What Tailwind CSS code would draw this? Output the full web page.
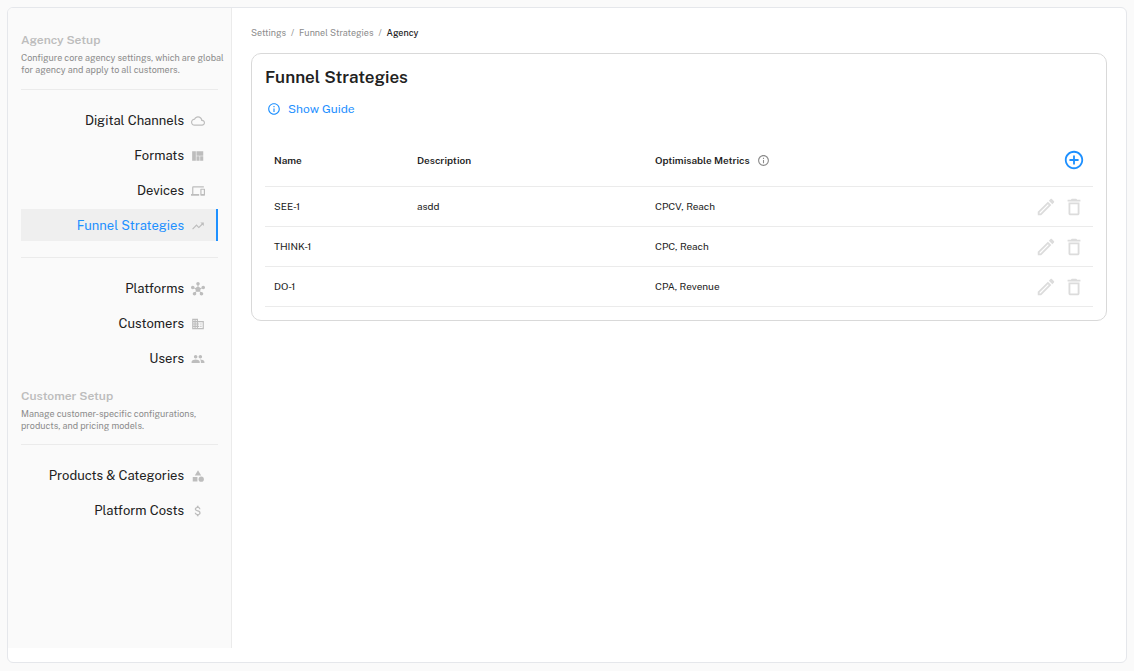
<!DOCTYPE html>
<html lang="en">
<head>
    <meta charset="UTF-8">
    <meta name="viewport" content="width=device-width, initial-scale=1.0">
    <title>Funnel Strategies</title>
    <script src="https://cdn.jsdelivr.net/npm/@tailwindcss/browser@4"></script>
</head>
<body class="bg-[#fafafa] font-['Public_Sans',Inter,sans-serif] text-[#212121] min-h-screen flex p-[7px] pb-2">

    <!-- Icons -->
    <svg class="hidden">
        <symbol id="edit" viewBox="0 0 24 24"><path d="M14.06 9.02l.92.92L5.92 19H5v-.92l9.06-9.06M17.66 3c-.25 0-.51.1-.7.29l-1.83 1.83 3.75 3.75 1.83-1.83c.39-.39.39-1.02 0-1.41l-2.34-2.34c-.2-.2-.45-.29-.71-.29zm-3.6 3.19L3 17.25V21h3.75L17.81 9.94l-3.75-3.75z"/></symbol>
        <symbol id="delete" viewBox="0 0 24 24"><path d="M16 9v10H8V9h8m-1.5-6h-5l-1 1H5v2h14V4h-3.5l-1-1zM18 7H6v12c0 1.1.9 2 2 2h8c1.1 0 2-.9 2-2V7z"/></symbol>
        <symbol id="info" viewBox="0 0 24 24"><path d="M11 7h2v2h-2zm0 4h2v6h-2zm1-9C6.48 2 2 6.48 2 12s4.48 10 10 10 10-4.48 10-10S17.52 2 12 2zm0 18c-4.41 0-8-3.59-8-8s3.59-8 8-8 8 3.59 8 8-3.59 8-8 8z"/></symbol>
    </svg>

    <div class="flex-1 flex items-stretch bg-white border border-[#e5e7eb] rounded-md overflow-hidden">

        <!-- Sidebar -->
        <aside class="w-56 shrink-0 mb-3.5 bg-[#fafafa] border-r border-[#ebebeb] px-[13px] pt-6">
            <h2 class="text-xs leading-4 font-semibold text-[#bdbdbd]">Agency Setup</h2>
            <p class="mt-1 -mr-3 text-[9px] leading-3 text-[#8c8c8c]">Configure core agency settings, which are global for agency and apply to all customers.</p>

            <nav class="mt-[13px] border-t border-[#ebebeb] pt-3.5 flex flex-col gap-[3px] text-[13px]">
                <a href="#" class="h-8 pt-0.5 flex items-center justify-end gap-[7px] pr-[13px]">
                    Digital Channels
                    <svg class="size-3.5 fill-[#bdbdbd]" viewBox="0 0 24 24"><path d="M19.35 10.04C18.67 6.59 15.64 4 12 4 9.11 4 6.6 5.64 5.35 8.04 2.34 8.36 0 10.91 0 14c0 3.31 2.69 6 6 6h13c2.76 0 5-2.24 5-5 0-2.64-2.05-4.78-4.65-4.96zM19 18H6c-2.21 0-4-1.79-4-4s1.79-4 4-4h.71C7.37 7.69 9.48 6 12 6c3.04 0 5.5 2.46 5.5 5.5v.5H19c1.66 0 3 1.34 3 3s-1.34 3-3 3z"/></svg>
                </a>
                <a href="#" class="h-8 pt-0.5 flex items-center justify-end gap-[7px] pr-[13px]">
                    Formats
                    <svg class="size-3.5 fill-[#bdbdbd]" viewBox="0 0 24 24"><path d="M21 4v7.5H9.33V4H21zm-6.33 16v-7.5H9.33V20h5.34zm1-7.5V20H21v-7.5h-5.33zM8.33 20V4H2v16h6.33z"/></svg>
                </a>
                <a href="#" class="h-8 pt-0.5 flex items-center justify-end gap-[7px] pr-[13px]">
                    Devices
                    <svg class="size-3.5 fill-[#bdbdbd]" viewBox="0 0 24 24"><path d="M4 6h18V4H4c-1.1 0-2 .9-2 2v11H0v3h14v-3H4V6zm19 2h-6c-.55 0-1 .45-1 1v10c0 .55.45 1 1 1h6c.55 0 1-.45 1-1V9c0-.55-.45-1-1-1zm-1 9h-4v-7h4v7z"/></svg>
                </a>
                <a href="#" class="h-8 pt-0.5 flex items-center justify-end gap-[7px] pr-[11px] bg-[#efefef] border-r-2 border-[#1e90ff] text-[#1e90ff]">
                    Funnel Strategies
                    <svg class="size-3.5 fill-[#bdbdbd]" viewBox="0 0 24 24"><path d="M16 6l2.29 2.29-4.88 4.88-4-4L2 16.59 3.41 18l6-6 4 4 6.3-6.29L22 12V6z"/></svg>
                </a>
            </nav>

            <nav class="mt-4 border-t border-[#ebebeb] pt-3.5 flex flex-col gap-[3px] text-[13px]">
                <a href="#" class="h-8 pt-0.5 flex items-center justify-end gap-[7px] pr-[13px]">
                    Platforms
                    <svg class="size-3.5 fill-[#bdbdbd]" viewBox="0 0 24 24"><path d="M8.4 18.2c.38.5.6 1.12.6 1.8 0 1.66-1.34 3-3 3s-3-1.34-3-3 1.34-3 3-3c.44 0 .85.09 1.23.26l1.41-1.77c-.92-1.03-1.29-2.39-1.09-3.69l-2.03-.68C4.98 11.95 4.06 12.5 3 12.5c-1.66 0-3-1.34-3-3s1.34-3 3-3 3 1.34 3 3c0 .07 0 .14-.01.21l2.03.68c.64-1.21 1.82-2.09 3.22-2.32V5.91C9.96 5.57 9 4.4 9 3c0-1.66 1.34-3 3-3s3 1.34 3 3c0 1.4-.96 2.57-2.25 2.91v2.16c1.4.23 2.58 1.11 3.22 2.32l2.03-.68C18 9.64 18 9.57 18 9.5c0-1.66 1.34-3 3-3s3 1.34 3 3-1.34 3-3 3c-1.06 0-1.98-.55-2.52-1.37l-2.03.68c.2 1.29-.16 2.65-1.09 3.69l1.41 1.77c.38-.17.79-.27 1.23-.27 1.66 0 3 1.34 3 3s-1.34 3-3 3-3-1.34-3-3c0-.68.22-1.3.6-1.8l-1.41-1.77c-1.35.75-3.01.76-4.37 0L8.4 18.2z"/></svg>
                </a>
                <a href="#" class="h-8 pt-0.5 flex items-center justify-end gap-[7px] pr-[13px]">
                    Customers
                    <svg class="size-3.5 fill-[#bdbdbd]" viewBox="0 0 24 24"><path d="M12 7V3H2v18h20V7H12zM6 19H4v-2h2v2zm0-4H4v-2h2v2zm0-4H4V9h2v2zm0-4H4V5h2v2zm4 12H8v-2h2v2zm0-4H8v-2h2v2zm0-4H8V9h2v2zm0-4H8V5h2v2zm10 12h-8v-2h2v-2h-2v-2h2v-2h-2V9h8v10zm-2-8h-2v2h2v-2zm0 4h-2v2h2v-2z"/></svg>
                </a>
                <a href="#" class="h-8 pt-0.5 flex items-center justify-end gap-[7px] pr-[13px]">
                    Users
                    <svg class="size-3.5 fill-[#bdbdbd]" viewBox="0 0 24 24"><path d="M16 11c1.66 0 2.99-1.34 2.99-3S17.66 5 16 5c-1.66 0-3 1.34-3 3s1.34 3 3 3zm-8 0c1.66 0 2.99-1.34 2.99-3S9.66 5 8 5C6.34 5 5 6.34 5 8s1.34 3 3 3zm0 2c-2.33 0-7 1.17-7 3.5V19h14v-2.5c0-2.33-4.67-3.5-7-3.5zm8 0c-.29 0-.62.02-.97.05 1.16.84 1.97 1.97 1.97 3.45V19h6v-2.5c0-2.33-4.67-3.5-7-3.5z"/></svg>
                </a>
            </nav>

            <h2 class="mt-3.5 text-xs leading-4 font-semibold text-[#bdbdbd]">Customer Setup</h2>
            <p class="mt-1 -mr-3 text-[9px] leading-3 text-[#8c8c8c]">Manage customer-specific configurations, products, and pricing models.</p>

            <nav class="mt-3 border-t border-[#ebebeb] pt-3.5 flex flex-col gap-[3px] text-[13px]">
                <a href="#" class="h-8 pt-0.5 flex items-center justify-end gap-[7px] pr-[13px]">
                    Products &amp; Categories
                    <svg class="size-3.5 fill-[#bdbdbd]" viewBox="0 0 24 24"><path d="M12 2l-5.5 9h11zM3 13.5h8v8H3z"/><circle cx="17.5" cy="17.5" r="4.5"/></svg>
                </a>
                <a href="#" class="h-8 pt-0.5 flex items-center justify-end gap-[7px] pr-[13px]">
                    Platform Costs
                    <svg class="size-3.5 fill-[#bdbdbd]" viewBox="0 0 24 24"><path d="M11.8 10.9c-2.27-.59-3-1.2-3-2.15 0-1.09 1.01-1.85 2.7-1.85 1.78 0 2.44.85 2.5 2.1h2.21c-.07-1.72-1.12-3.3-3.21-3.81V3h-3v2.16c-1.94.42-3.5 1.68-3.5 3.61 0 2.31 1.91 3.46 4.7 4.13 2.5.6 3 1.48 3 2.41 0 .69-.49 1.79-2.7 1.79-2.06 0-2.87-.92-2.98-2.1h-2.2c.12 2.19 1.76 3.42 3.68 3.83V21h3v-2.15c1.95-.37 3.5-1.5 3.5-3.55 0-2.84-2.43-3.81-4.7-4.4z"/></svg>
                </a>
            </nav>
        </aside>

        <!-- Content -->
        <main class="flex-1 px-[19px] pt-[19px]">
            <nav class="flex gap-[5px] text-[9px] leading-3 text-[#8c8c8c]">
                <a href="#">Settings</a>
                <span>/</span>
                <a href="#">Funnel Strategies</a>
                <span>/</span>
                <span class="font-medium text-[#212121]">Agency</span>
            </nav>

            <section class="mt-3.5 border border-[#d9d9d9] rounded-[10px] p-[13px]">
                <h1 class="text-[17px] leading-5 font-semibold">Funnel Strategies</h1>
                <button class="mt-3 ml-0.5 flex items-center gap-[7px] text-xs leading-5 text-[#1e90ff]">
                    <svg class="size-3.5 fill-current"><use href="#info"/></svg>
                    Show Guide
                </button>

                <table class="mt-4 w-full table-fixed text-[10px] text-left">
                    <thead>
                        <tr class="h-[51px] border-b border-[#ebebeb]">
                            <th class="w-[143px] px-[9px] font-semibold">Name</th>
                            <th class="w-[238px] px-[9px] font-semibold">Description</th>
                            <th class="px-[9px] font-semibold">
                                <div class="flex items-center gap-[7px]">
                                    Optimisable Metrics
                                    <svg class="size-[13px] fill-[#8c8c8c]"><use href="#info"/></svg>
                                </div>
                            </th>
                            <th class="w-20 px-2">
                                <button aria-label="Add strategy" class="block ml-auto">
                                    <svg class="size-[22px] fill-[#1e90ff]" viewBox="0 0 24 24"><path d="M13 7h-2v4H7v2h4v4h2v-4h4v-2h-4V7zm-1-5C6.48 2 2 6.48 2 12s4.48 10 10 10 10-4.48 10-10S17.52 2 12 2zm0 18c-4.41 0-8-3.59-8-8s3.59-8 8-8 8 3.59 8 8-3.59 8-8 8z"/></svg>
                                </button>
                            </th>
                        </tr>
                    </thead>
                    <tbody>
                        <tr class="h-10 border-b border-[#ebebeb]">
                            <td class="px-[9px]">SEE-1</td>
                            <td class="px-[9px]">asdd</td>
                            <td class="px-[9px]">CPCV, Reach</td>
                            <td class="px-2 pt-px">
                                <div class="flex justify-end gap-1.5">
                                    <button aria-label="Edit"><svg class="size-[22px] fill-[#dcdcdc]"><use href="#edit"/></svg></button>
                                    <button aria-label="Delete"><svg class="size-[22px] fill-[#dcdcdc]"><use href="#delete"/></svg></button>
                                </div>
                            </td>
                        </tr>
                        <tr class="h-10 border-b border-[#ebebeb]">
                            <td class="px-[9px]">THINK-1</td>
                            <td class="px-[9px]"></td>
                            <td class="px-[9px]">CPC, Reach</td>
                            <td class="px-2 pt-px">
                                <div class="flex justify-end gap-1.5">
                                    <button aria-label="Edit"><svg class="size-[22px] fill-[#dcdcdc]"><use href="#edit"/></svg></button>
                                    <button aria-label="Delete"><svg class="size-[22px] fill-[#dcdcdc]"><use href="#delete"/></svg></button>
                                </div>
                            </td>
                        </tr>
                        <tr class="h-10 border-b border-[#ebebeb]">
                            <td class="px-[9px]">DO-1</td>
                            <td class="px-[9px]"></td>
                            <td class="px-[9px]">CPA, Revenue</td>
                            <td class="px-2 pt-px">
                                <div class="flex justify-end gap-1.5">
                                    <button aria-label="Edit"><svg class="size-[22px] fill-[#dcdcdc]"><use href="#edit"/></svg></button>
                                    <button aria-label="Delete"><svg class="size-[22px] fill-[#dcdcdc]"><use href="#delete"/></svg></button>
                                </div>
                            </td>
                        </tr>
                    </tbody>
                </table>
            </section>
        </main>

    </div>

</body>
</html>
